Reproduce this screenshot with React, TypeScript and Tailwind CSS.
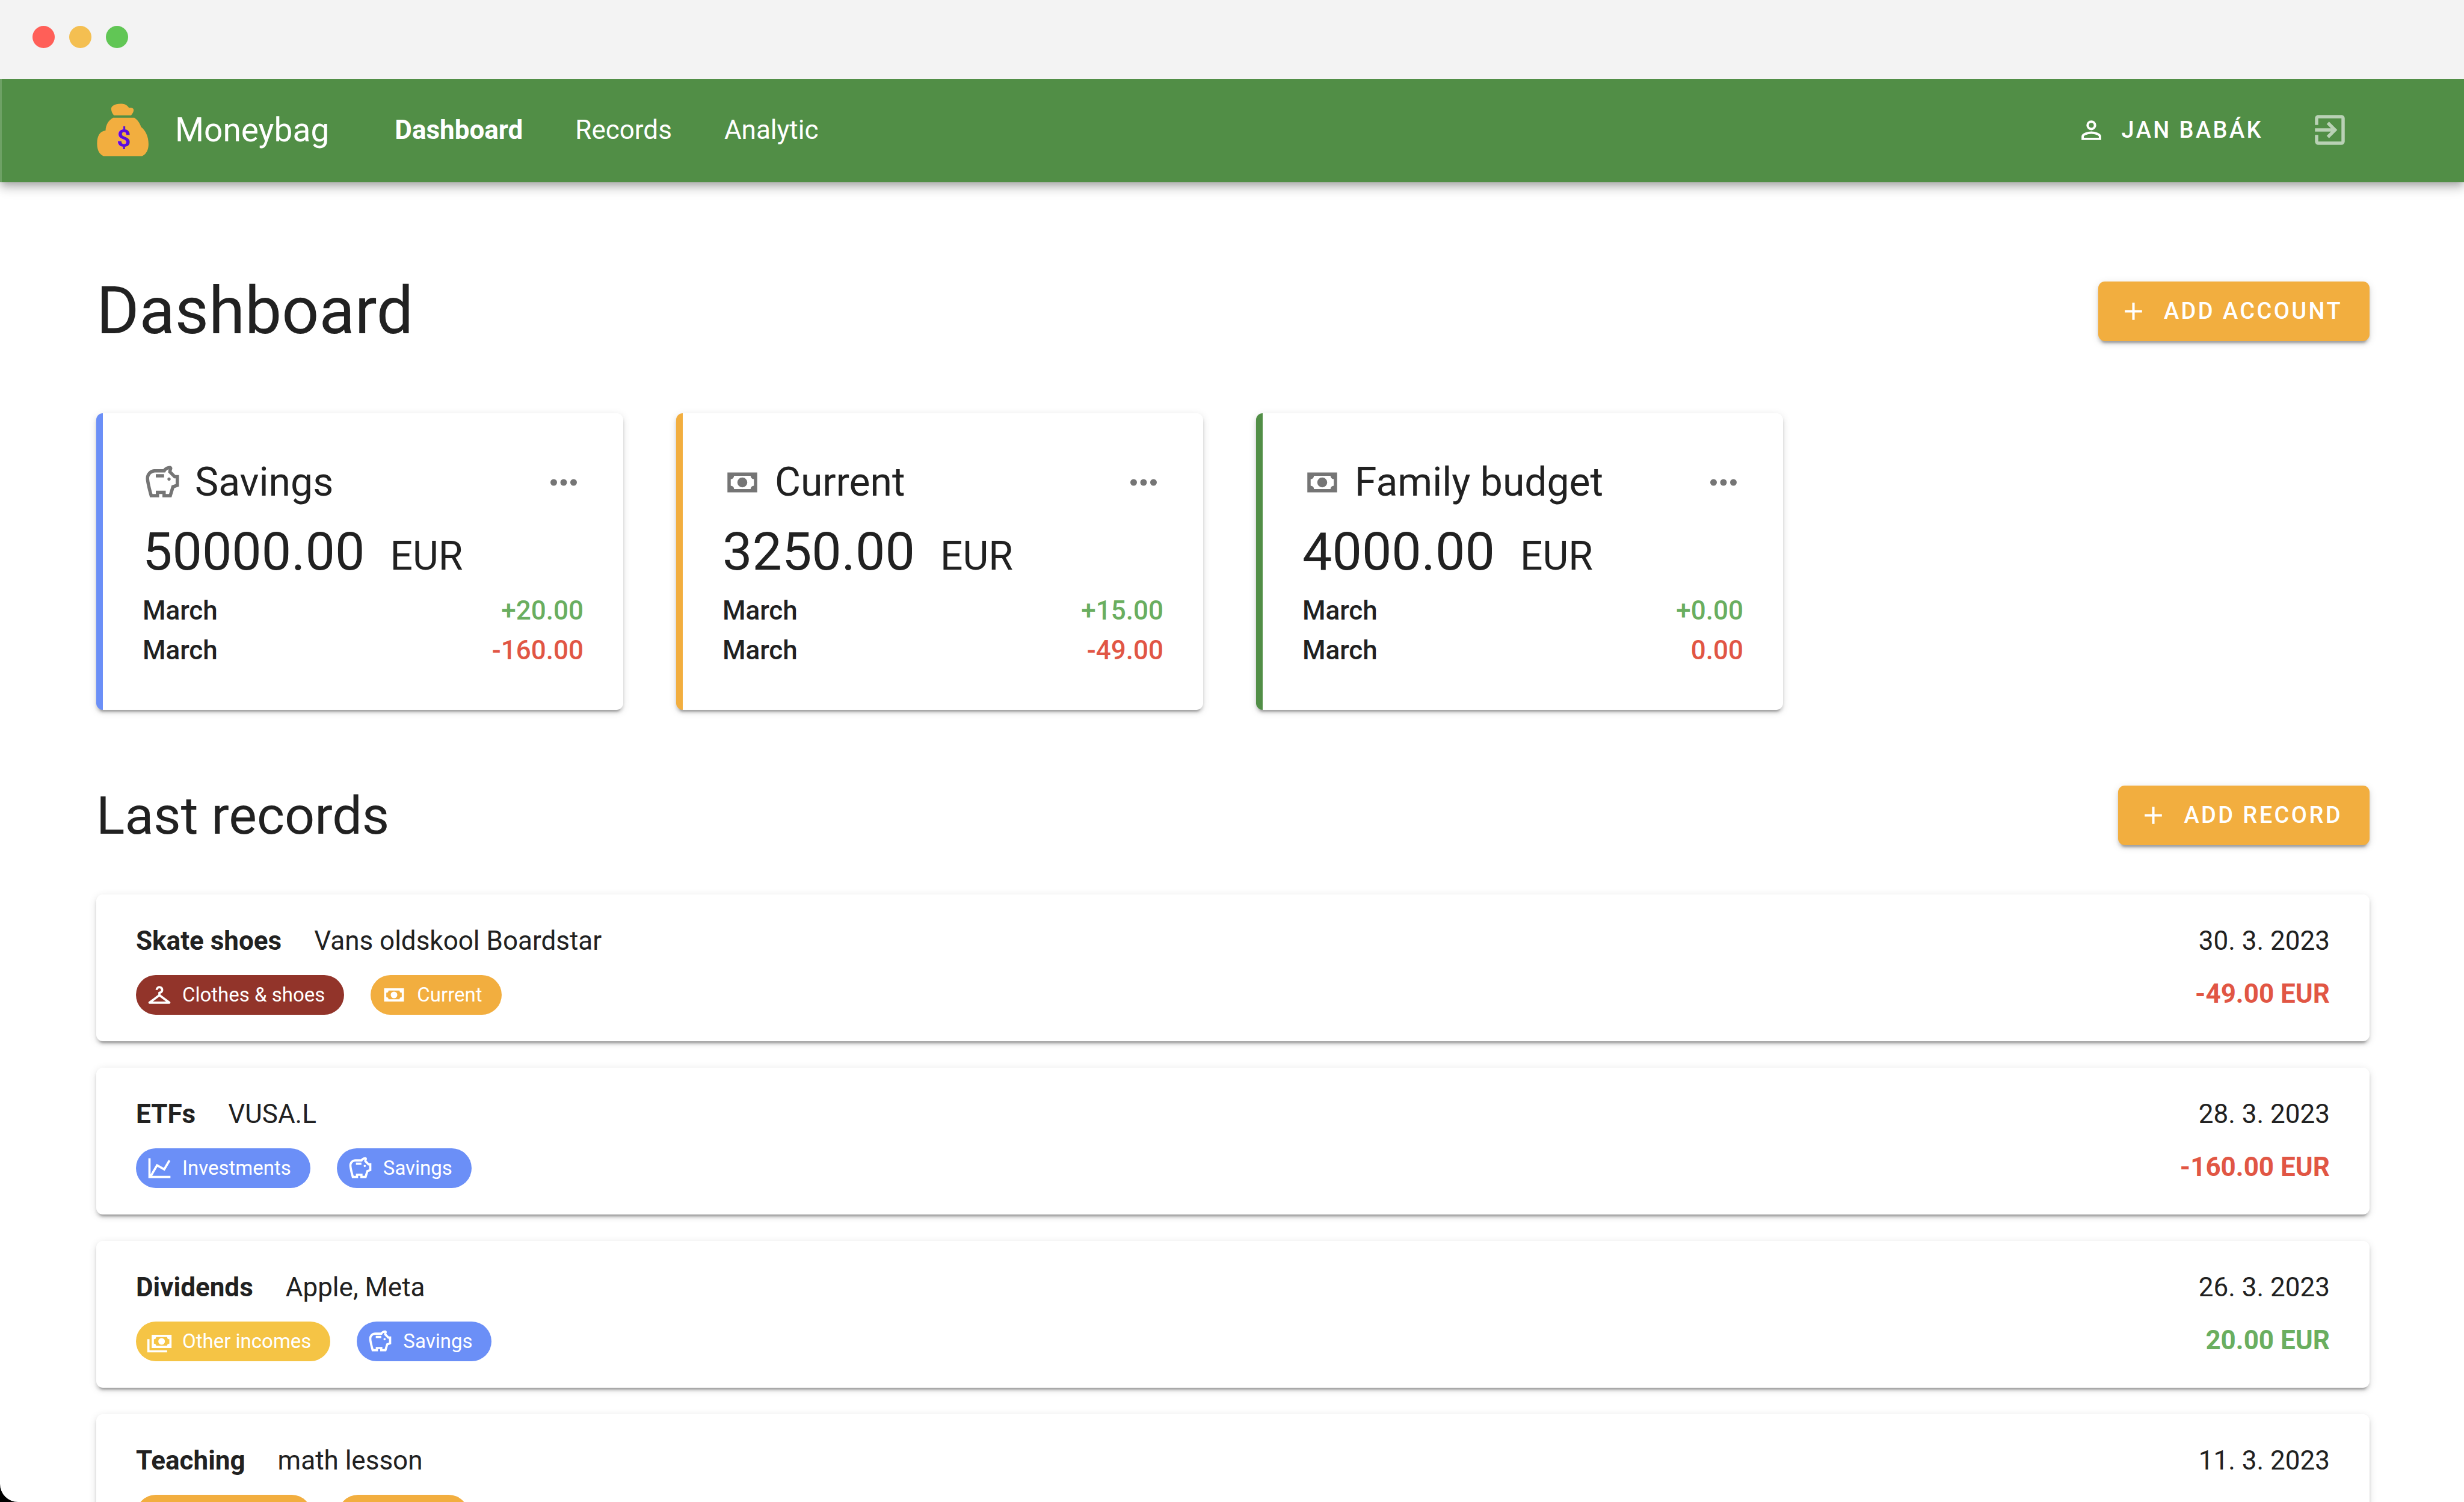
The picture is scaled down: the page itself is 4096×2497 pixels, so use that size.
import type { ReactNode } from "react";
import { MdCheckroom } from "react-icons/md";

const paths = {
  piggy:
    "M15 10C15 9.45 15.45 9 16 9C16.55 9 17 9.45 17 10S16.55 11 16 11 15 10.55 15 10M8 9H13V7H8V9M22 7.5V14.47L19.18 15.41L17.5 21H12V19H10V21H4.5C4.5 21 2 12.54 2 9.5S4.46 4 7.5 4H12.5C13.41 2.79 14.86 2 16.5 2C17.33 2 18 2.67 18 3.5C18 3.71 17.96 3.9 17.88 4.08C17.74 4.42 17.62 4.81 17.56 5.23L19.83 7.5H22M20 9.5H19L15.5 6C15.5 5.35 15.59 4.71 15.76 4.09C14.79 4.34 14 5.06 13.67 6H7.5C5.57 6 4 7.57 4 9.5C4 11.38 5.22 16.15 6 19H8V17H14V19H16L17.56 13.85L20 13.03V9.5Z",
  cash: "M3,6H21V18H3V6M12,9A3,3 0 0,1 15,12A3,3 0 0,1 12,15A3,3 0 0,1 9,12A3,3 0 0,1 12,9M7,8A2,2 0 0,1 5,10V14A2,2 0 0,1 7,16H17A2,2 0 0,1 19,14V10A2,2 0 0,1 17,8H7Z",
  cashMultiple:
    "M5,6H23V18H5V6M14,9A3,3 0 0,1 17,12A3,3 0 0,1 14,15A3,3 0 0,1 11,12A3,3 0 0,1 14,9M9,8A2,2 0 0,1 7,10V14A2,2 0 0,1 9,16H19A2,2 0 0,1 21,14V10A2,2 0 0,1 19,8H9M1,10H3V20H19V22H1V10Z",
  chart:
    "M16,11.78L20.24,4.45L21.97,5.45L16.74,14.5L10.23,10.75L5.46,19H22V21H2V3H4V17.54L9.5,8L16,11.78Z",
  exit: "M19,3H5C3.89,3 3,3.89 3,5V9H5V5H19V19H5V15H3V19A2,2 0 0,0 5,21H19A2,2 0 0,0 21,19V5C21,3.89 20.1,3 19,3M10.08,15.58L11.5,17L16.5,12L11.5,7L10.08,8.41L12.67,11H3V13H12.67L10.08,15.58Z",
  account:
    "M12,4A4,4 0 0,1 16,8A4,4 0 0,1 12,12A4,4 0 0,1 8,8A4,4 0 0,1 12,4M12,6A2,2 0 0,0 10,8A2,2 0 0,0 12,10A2,2 0 0,0 14,8A2,2 0 0,0 12,6M12,13C14.67,13 20,14.33 20,17V20H4V17C4,14.33 9.33,13 12,13M12,14.9C9.03,14.9 5.9,16.36 5.9,17V18.1H18.1V17C18.1,16.36 14.97,14.9 12,14.9Z",
  dots: "M16,12A2,2 0 0,1 18,10A2,2 0 0,1 20,12A2,2 0 0,1 18,14A2,2 0 0,1 16,12M10,12A2,2 0 0,1 12,10A2,2 0 0,1 14,12A2,2 0 0,1 12,14A2,2 0 0,1 10,12M4,12A2,2 0 0,1 6,10A2,2 0 0,1 8,12A2,2 0 0,1 6,14A2,2 0 0,1 4,12Z",
  plus: "M19,13H13V19H11V13H5V11H11V5H13V11H19V13Z",
};

type IconName = keyof typeof paths;

function Icon({ name, className }: { name: IconName; className: string }) {
  return (
    <svg viewBox="0 0 24 24" fill="currentColor" aria-hidden="true" className={className}>
      <path d={paths[name]} />
    </svg>
  );
}

function MoneybagLogo() {
  return (
    <svg viewBox="38 46 308 318" className="h-[88px] w-[86px] shrink-0" aria-hidden="true">
      <path
        fill="#f2ae3f"
        d="M139 117C130 108 122 92 123 76C124 66 131 62 138 57C152 46 196 44 212 55C222 61 226 68 230 73C236 70 250 72 255 78C262 87 254 105 242 117Z"
      />
      <path
        fill="#f2ae3f"
        d="M134 132H262C281 145 296 166 302 187C328 207 347 243 347 290C347 330 330 353 308 362H77C52 352 38 326 38 286C38 240 56 213 89 209C90 174 107 147 134 132Z"
      />
      <text
        x="198"
        y="308"
        textAnchor="middle"
        fill="#5a0be0"
        className="font-['Roboto',sans-serif] text-[146px] font-bold"
      >
        $
      </text>
    </svg>
  );
}

const raised =
  "shadow-[0_8px_3px_-5px_rgba(0,0,0,0.2),0_5px_5px_0_rgba(0,0,0,0.14),0_3px_14px_0_rgba(0,0,0,0.12)]";

function AddButton({ children }: { children: ReactNode }) {
  return (
    <button
      type="button"
      className={`flex h-[99px] items-center gap-[26px] rounded-[11px] bg-[#f2ae3f] pr-[45px] pl-[34px] text-[38px] font-medium tracking-[0.09em] text-white uppercase ${raised}`}
    >
      <Icon name="plus" className="size-[49px]" />
      {children}
    </button>
  );
}

type Account = {
  name: string;
  icon: IconName;
  border: string;
  amount: string;
  income: string;
  expense: string;
};

const accounts: Account[] = [
  { name: "Savings", icon: "piggy", border: "border-[#6b8ff7]", amount: "50000.00", income: "+20.00", expense: "-160.00" },
  { name: "Current", icon: "cash", border: "border-[#f2ae3f]", amount: "3250.00", income: "+15.00", expense: "-49.00" },
  { name: "Family budget", icon: "cash", border: "border-[#518e46]", amount: "4000.00", income: "+0.00", expense: "0.00" },
];

function AccountCard({ account }: { account: Account }) {
  return (
    <article
      className={`w-[876px] rounded-[11px] border-l-[11px] bg-white p-[66px] ${account.border} ${raised}`}
    >
      <div className="flex h-[98px] items-center gap-[21px]">
        <Icon name={account.icon} className="size-[66px] text-[#757575]" />
        <h3 className="text-[66px] leading-[98px]">{account.name}</h3>
        <button type="button" aria-label={`${account.name} options`} className="ml-auto text-[#757575]">
          <Icon name="dots" className="size-[66px]" />
        </button>
      </div>
      <p className="flex items-baseline gap-[42px] text-[88px] leading-[131px]">
        {account.amount}
        <span className="text-[66px] leading-[66px]">EUR</span>
      </p>
      <dl className="text-[44px] leading-[66px] font-medium">
        <div className="flex justify-between">
          <dt>March</dt>
          <dd className="text-[#6aae5f]">{account.income}</dd>
        </div>
        <div className="flex justify-between">
          <dt>March</dt>
          <dd className="text-[#e15644]">{account.expense}</dd>
        </div>
      </dl>
    </article>
  );
}

type Tag = { label?: string; icon?: IconName | "hanger"; color: string };

type Entry = {
  title: string;
  note: string;
  date: string;
  amount?: string;
  amountColor?: string;
  tags: Tag[];
};

const savingsTag: Tag = { label: "Savings", icon: "piggy", color: "bg-[#6b8ff7]" };

const entries: Entry[] = [
  {
    title: "Skate shoes",
    note: "Vans oldskool Boardstar",
    date: "30. 3. 2023",
    amount: "-49.00 EUR",
    amountColor: "text-[#e15644]",
    tags: [
      { label: "Clothes & shoes", icon: "hanger", color: "bg-[#92342a]" },
      { label: "Current", icon: "cash", color: "bg-[#f2ae3f]" },
    ],
  },
  {
    title: "ETFs",
    note: "VUSA.L",
    date: "28. 3. 2023",
    amount: "-160.00 EUR",
    amountColor: "text-[#e15644]",
    tags: [{ label: "Investments", icon: "chart", color: "bg-[#6b8ff7]" }, savingsTag],
  },
  {
    title: "Dividends",
    note: "Apple, Meta",
    date: "26. 3. 2023",
    amount: "20.00 EUR",
    amountColor: "text-[#6aae5f]",
    tags: [{ label: "Other incomes", icon: "cashMultiple", color: "bg-[#f5c445]" }, savingsTag],
  },
  {
    title: "Teaching",
    note: "math lesson",
    date: "11. 3. 2023",
    tags: [{ color: "w-[292px] bg-[#f2ae3f]" }, { color: "w-[217px] bg-[#f2ae3f]" }],
  },
];

function Chip({ tag }: { tag: Tag }) {
  return (
    <li
      className={`flex h-[66px] items-center gap-[16px] rounded-full pr-[32px] pl-[17px] text-[33px] text-white ${tag.color}`}
    >
      {tag.icon === "hanger" && <MdCheckroom className="size-[44px]" aria-hidden="true" />}
      {tag.icon && tag.icon !== "hanger" && <Icon name={tag.icon} className="size-[44px]" />}
      {tag.label}
    </li>
  );
}

function RecordCard({ entry }: { entry: Entry }) {
  return (
    <li className={`flex justify-between rounded-[11px] bg-white px-[66px] py-[44px] ${raised}`}>
      <div>
        <p className="flex gap-[54px] text-[44px] leading-[66px]">
          <b className="font-bold">{entry.title}</b>
          <span>{entry.note}</span>
        </p>
        <ul className="mt-[24px] flex gap-[44px]">
          {entry.tags.map((tag, index) => (
            <Chip key={index} tag={tag} />
          ))}
        </ul>
      </div>
      <div className="text-right text-[44px] leading-[66px]">
        <p>{entry.date}</p>
        {entry.amount && <p className={`mt-[22px] font-bold ${entry.amountColor}`}>{entry.amount}</p>}
      </div>
    </li>
  );
}

export default function App() {
  return (
    <div className="h-screen overflow-hidden bg-black font-['Roboto',sans-serif] text-[#212121]">
      <div className="flex h-full flex-col overflow-hidden rounded-bl-[30px] bg-white">
        <div className="flex h-[131px] shrink-0 items-start gap-[24px] bg-[#f3f3f3] pt-[43px] pl-[54px]">
          <span className="size-[37px] rounded-full bg-[#ff5f58]" />
          <span className="size-[37px] rounded-full bg-[#f4bf51]" />
          <span className="size-[37px] rounded-full bg-[#61c655]" />
        </div>

        <header className="flex h-[172px] shrink-0 items-center border-l-[3px] border-[#6ea165] bg-[#518e46] pr-[190px] pb-[2px] pl-[158px] text-white shadow-[0_5px_11px_-3px_rgba(0,0,0,0.2),0_11px_14px_0_rgba(0,0,0,0.14),0_3px_27px_0_rgba(0,0,0,0.12)] [clip-path:inset(0_0_-60px_0)]">
          <MoneybagLogo />
          <span className="ml-[44px] text-[55px] leading-[66px]">Moneybag</span>
          <nav className="ml-[109px] flex gap-[87px] text-[44px]">
            <a href="#dashboard" className="font-bold">
              Dashboard
            </a>
            <a href="#records">Records</a>
            <a href="#analytic">Analytic</a>
          </nav>
          <button
            type="button"
            className="ml-auto flex items-center gap-[26px] text-[38px] font-medium tracking-[0.09em] uppercase"
          >
            <Icon name="account" className="size-[49px]" />
            Jan Babák
          </button>
          <button type="button" aria-label="Log out" className="ml-[78px] text-[#b9d1b5]">
            <Icon name="exit" className="size-[66px]" />
          </button>
        </header>

        <main className="pt-[149px] pr-[157px] pl-[160px]">
          <div className="mb-[104px] flex items-center justify-between">
            <h1 className="text-[109px] leading-[131px]">Dashboard</h1>
            <AddButton>Add account</AddButton>
          </div>
          <section className="mb-[110px] flex gap-[88px]" aria-label="Accounts">
            {accounts.map((account) => (
              <AccountCard key={account.name} account={account} />
            ))}
          </section>
          <div className="mb-[66px] flex items-center justify-between">
            <h2 className="text-[88px] leading-[131px]">Last records</h2>
            <AddButton>Add record</AddButton>
          </div>
          <ul className="flex flex-col gap-[44px]">
            {entries.map((entry) => (
              <RecordCard key={entry.title} entry={entry} />
            ))}
          </ul>
        </main>
      </div>
    </div>
  );
}
